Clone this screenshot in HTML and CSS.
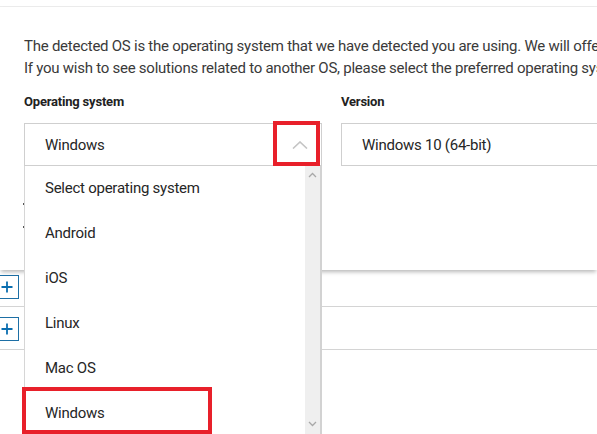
FILE: index.html
```
<!DOCTYPE html>
<html>
<head>
<meta charset="utf-8">
<link rel="stylesheet" href="styles.css">
</head>
<body>
<div class="topbar"></div>
<div class="card">
  <p class="intro">The detected OS is the operating system that we have detected you are using. We will offer you solutions related to this OS.<br>If you wish to see solutions related to another OS, please select the preferred operating system and version below.</p>
  <div class="form">
    <div class="field">
      <div class="label">Operating system</div>
      <div class="select">
        <span>Windows</span>
        <svg class="chev" width="16" height="8" viewBox="0 0 16 8"><path d="M1 7.5 L8 1 L15 7.5" fill="none" stroke="#c4c4c4" stroke-width="1.6"/></svg>
        <div class="hl hl-arrow"></div>
        <div class="list">
          <div class="items">
            <div class="item">Select operating system</div>
            <div class="item">Android</div>
            <div class="item">iOS</div>
            <div class="item">Linux</div>
            <div class="item">Mac OS</div>
            <div class="item">Windows</div>
          </div>
          <div class="sbar">
            <svg width="9" height="6" viewBox="0 0 9 6"><path d="M1 5 L4.5 1.5 L8 5" fill="none" stroke="#a8a8a8" stroke-width="1.3"/></svg>
            <svg width="9" height="6" viewBox="0 0 9 6"><path d="M1 1 L4.5 4.5 L8 1" fill="none" stroke="#a8a8a8" stroke-width="1.3"/></svg>
          </div>
        </div>
        <div class="hl hl-item"></div>
      </div>
    </div>
    <div class="field">
      <div class="label">Version</div>
      <div class="select"><span>Windows 10 (64-bit)</span></div>
    </div>
  </div>
  <div class="hidden">
    <i class="tick"></i>
    <i class="tick"></i>
  </div>
</div>
<div class="rows">
  <div class="row r1"><div class="plus"><svg width="12" height="12" viewBox="0 0 12 12"><path d="M6 0.5 V11.5 M0.5 6 H11.5" stroke="#0a6eb0" stroke-width="1.8"/></svg></div></div>
  <div class="row r2"><div class="plus"><svg width="12" height="12" viewBox="0 0 12 12"><path d="M6 0.5 V11.5 M0.5 6 H11.5" stroke="#0a6eb0" stroke-width="1.8"/></svg></div></div>
</div>
</body>
</html>
```
FILE: styles.css
```
html, body {
  margin: 0;
  padding: 0;
  background: #fff;
  overflow: hidden;
  width: 597px;
  height: 434px;
}
body {
  font-family: Roboto, "Liberation Sans", sans-serif;
  color: #2e2e2e;
  font-size: 15px;
  letter-spacing: -0.25px;
}
.topbar {
  height: 6px;
  border-bottom: 1px solid #ececec;
}
.card {
  position: relative;
  z-index: 2;
  padding: 28px 0 26px 24px;
  background: #fff;
  box-shadow: 0 3px 4px -1px rgba(0,0,0,0.28);
}
.intro {
  margin: 0;
  line-height: 22px;
  white-space: nowrap;
  color: #3a3a3a;
}
.form {
  display: flex;
  gap: 19px;
  margin-top: 14px;
}
.field {
  width: 298px;
  flex: none;
}
.label {
  font-weight: 700;
  font-size: 13px;
  line-height: 18px;
  color: #222;
  margin-bottom: 12px;
  letter-spacing: -0.2px;
}
.select {
  position: relative;
  box-sizing: border-box;
  height: 43px;
  border: 1px solid #cfcfcf;
  padding-left: 20px;
  display: flex;
  align-items: center;
  white-space: nowrap;
  color: #262626;
}
.chev {
  position: absolute;
  left: 267px;
  top: 17px;
}
.hl {
  position: absolute;
  border: 4px solid #e8202a;
  box-sizing: border-box;
  z-index: 5;
}
.hl-arrow {
  left: 248px;
  top: -3px;
  width: 47px;
  height: 45px;
}
.hl-item {
  left: -3px;
  top: 263px;
  width: 190px;
  height: 47px;
}
.list {
  position: absolute;
  left: -1px;
  top: 42px;
  width: 298px;
  height: 275px;
  box-sizing: border-box;
  background: #fff;
  border-left: 1px solid #d6d6d6;
  border-right: 2px solid #d2d2d2;
  display: flex;
  z-index: 4;
}
.items {
  flex: 1;
}
.item {
  height: 45px;
  line-height: 45px;
  padding-left: 20px;
  color: #262626;
}
.sbar {
  width: 15px;
  background: #efefef;
  display: flex;
  flex-direction: column;
  justify-content: space-between;
  align-items: center;
  padding: 6px 0 14px;
  box-sizing: border-box;
}
.hidden {
  margin-top: 37px;
  margin-left: -1px;
  display: flex;
  flex-direction: column;
  gap: 21px;
  height: 41px;
}
.tick {
  display: block;
  width: 1px;
  height: 2px;
  background: #555;
}
.rows {
  position: relative;
  z-index: 1;
}
.row {
  border-bottom: 1px solid #d4d4d4;
}
.r1 {
  padding: 5px 0 7px;
}
.r2 {
  padding: 10px 0 8px;
}
.plus {
  box-sizing: border-box;
  width: 24px;
  height: 24px;
  margin-left: -5px;
  border: 1px solid #1d6fa5;
  display: flex;
  align-items: center;
  justify-content: center;
}
```
